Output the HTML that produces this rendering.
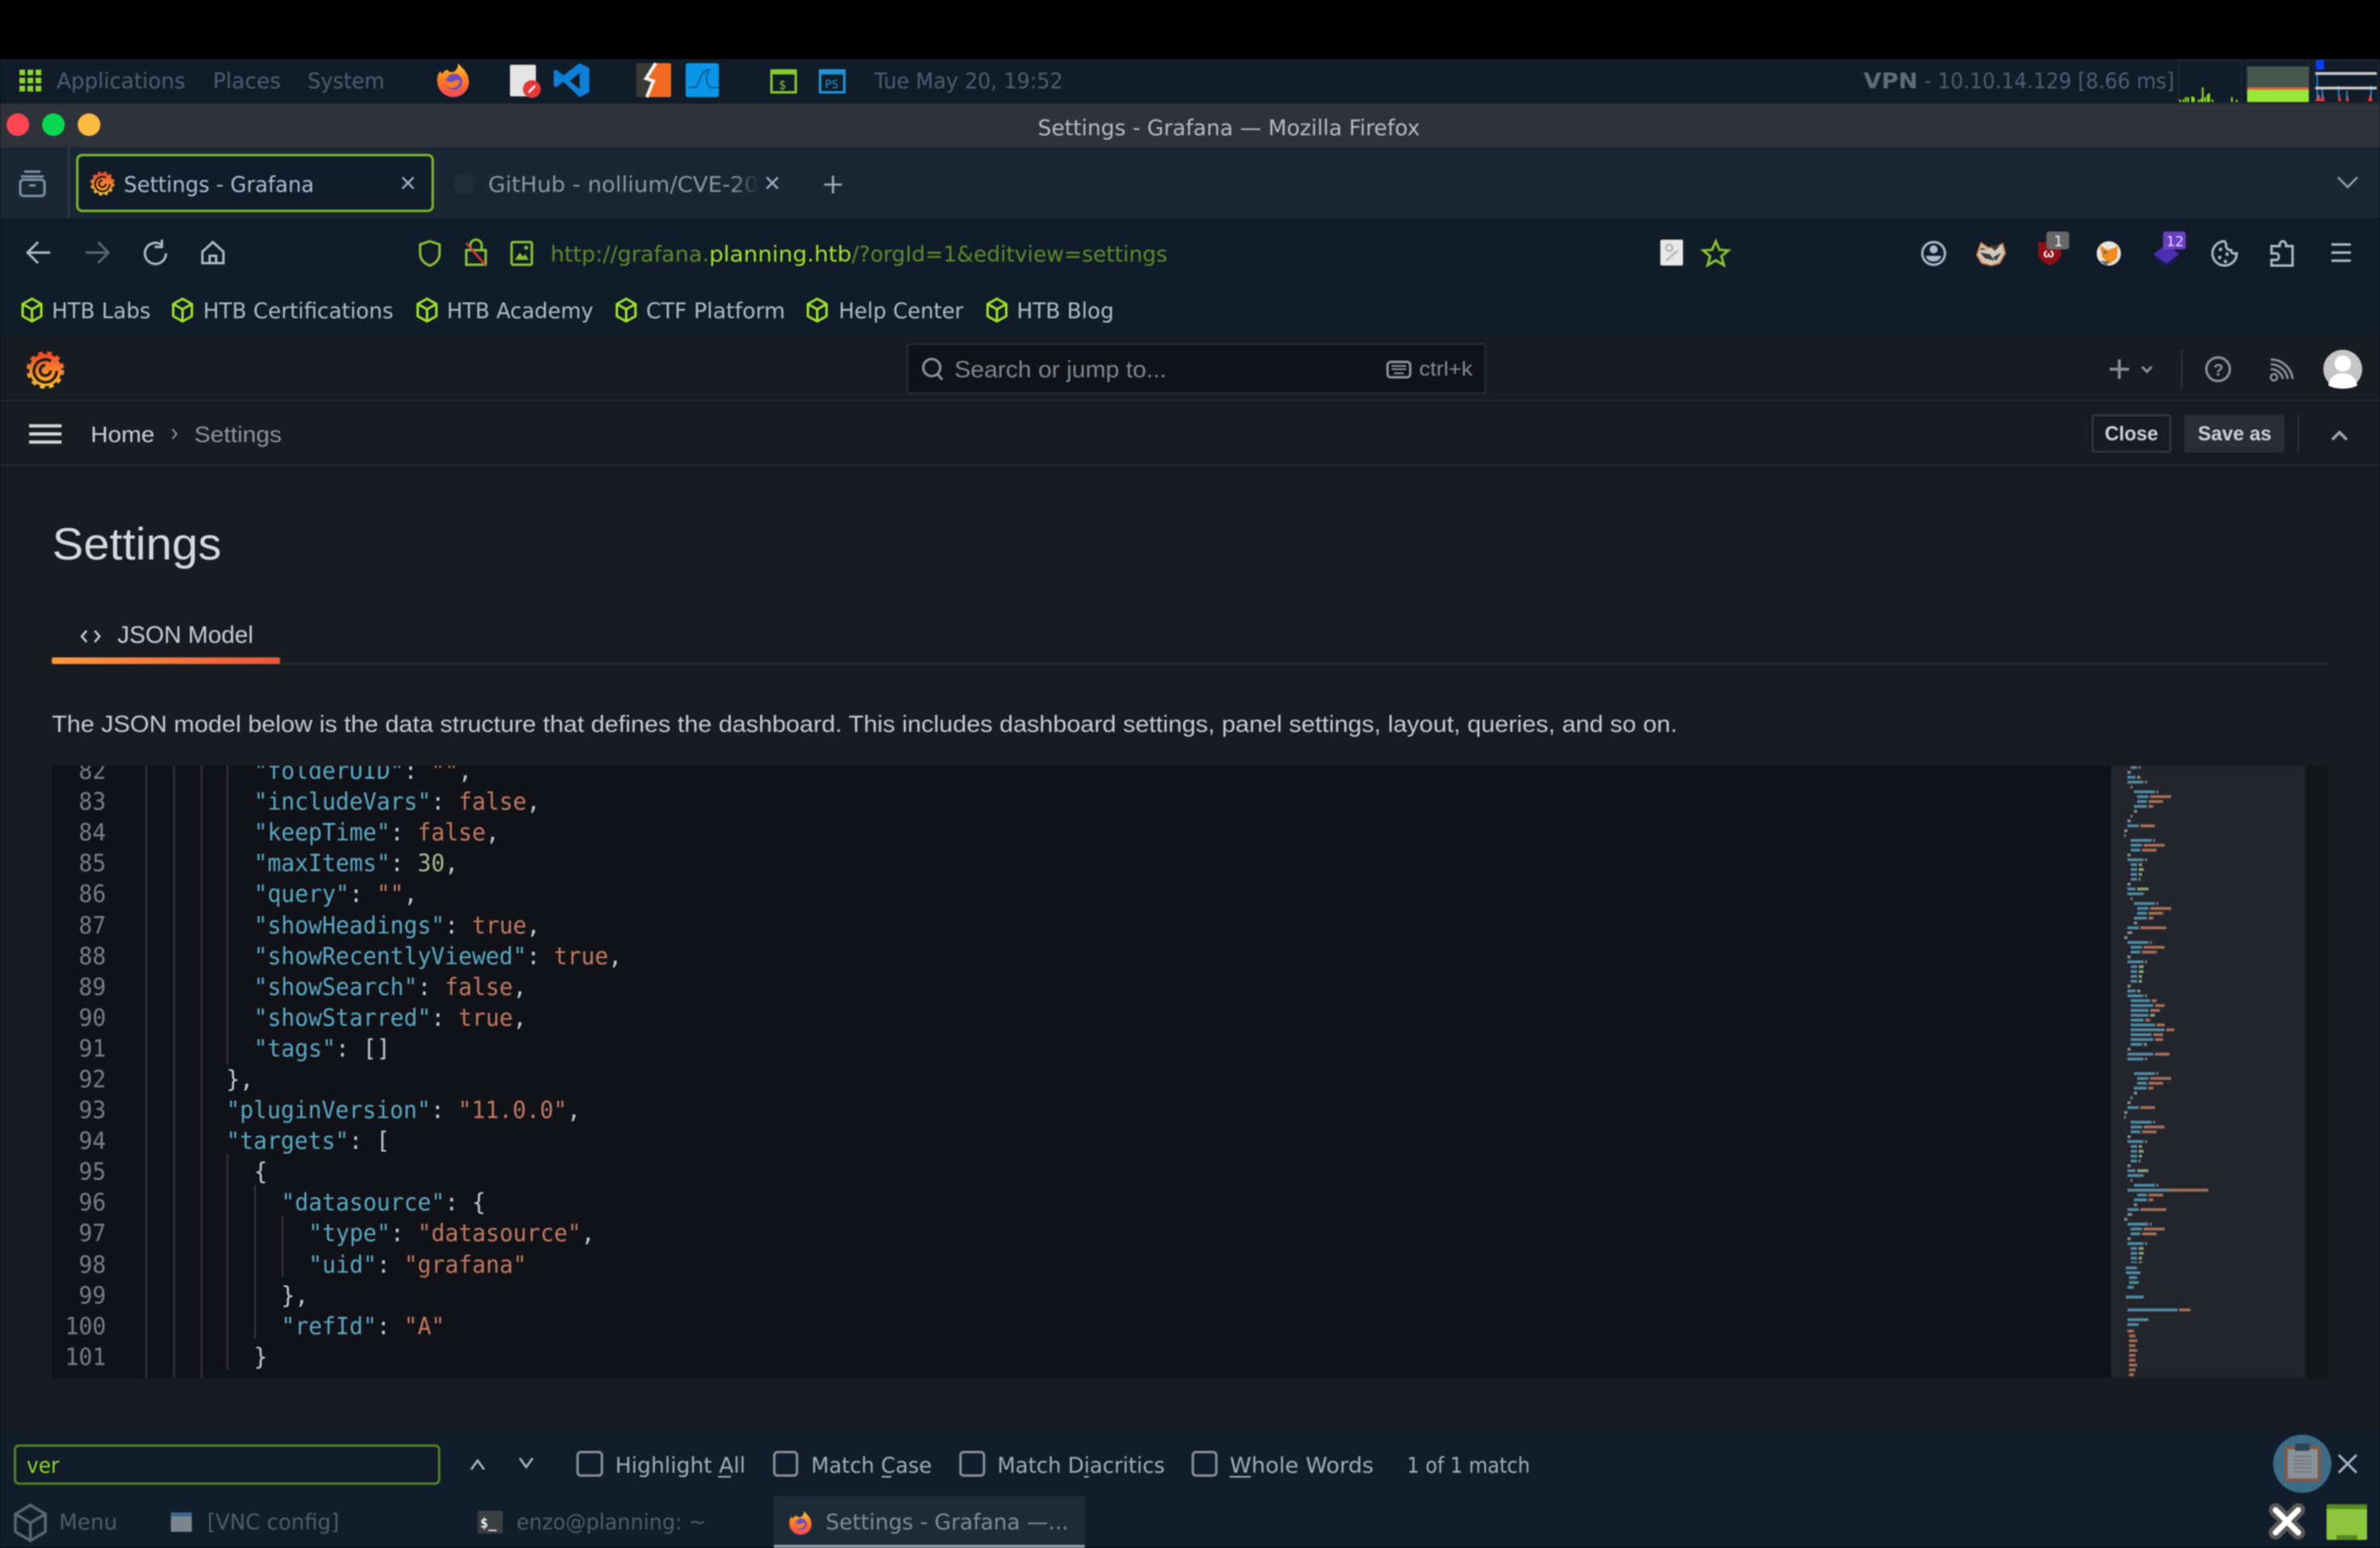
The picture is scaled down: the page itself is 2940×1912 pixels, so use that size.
<!DOCTYPE html>
<html><head><meta charset="utf-8"><title>Settings - Grafana</title>
<style>
html,body{margin:0;padding:0;background:#000;width:2940px;height:1912px;overflow:hidden}
svg{display:block;filter:blur(.7px)}
.u{font-family:"DejaVu Sans",sans-serif}
.i{font-family:"Liberation Sans",sans-serif}
.m{font-family:"DejaVu Sans Mono",monospace;font-size:29px;fill:#c8cad2}
.k{fill:#5aa9c4}.s{fill:#c07a62}.n{fill:#a9b88f}
.ln{font-family:"DejaVu Sans Mono",monospace;font-size:29px;fill:#7a7e85;text-anchor:end}
</style></head><body>
<svg xmlns="http://www.w3.org/2000/svg" width="2940" height="1912" viewBox="0 0 2940 1912">
<defs>
<linearGradient id="gg" x1="0" y1="0" x2="0" y2="1"><stop offset="0" stop-color="#f0492c"/><stop offset="1" stop-color="#fbc02d"/></linearGradient>
<linearGradient id="ul" x1="0" y1="0" x2="1" y2="0"><stop offset="0" stop-color="#ff9a3c"/><stop offset="1" stop-color="#f0533a"/></linearGradient>
<linearGradient id="ff" x1="0" y1="0" x2="0" y2="1"><stop offset="0" stop-color="#ffc42e"/><stop offset=".5" stop-color="#ff7a1f"/><stop offset="1" stop-color="#f0445c"/></linearGradient>
<symbol id="graf" viewBox="0 0 48 48">
<circle cx="24" cy="25" r="20" fill="url(#gg)"/>
<circle cx="24" cy="25" r="21.500" fill="none" stroke="url(#gg)" stroke-width="3.500" stroke-dasharray="6 5.500"/>
<path d="M31 14a14 14 0 1 0 7 12M24 19a6.500 6.500 0 1 0 6.500 6.500" fill="none" stroke="#2a1c18" stroke-width="3.500"/>
</symbol>
<symbol id="fox" viewBox="0 0 40 42">
<path d="M26 0c3 5 11 9 13 20 2 13-8 22-19 22S0 33 0 21c0-5 2-9 4-11l2 4c1-3 4-5 6-6 2 2 4 3 6 3 4 0 8-4 8-11z" fill="url(#ff)"/>
<circle cx="21" cy="23" r="10" fill="#6f4bc0"/><path d="M11 21c4 4 9 2 12 0 2-1 4 0 5 2-2 7-9 9-13 7-3-2-4-5-4-9z" fill="#f77b21"/>
</symbol>
<symbol id="cube" viewBox="0 0 27 32"><path d="M13.500 2L25 8.500V23.500L13.500 30L2 23.500V8.500ZM2 8.500L13.500 15L25 8.500M13.500 15V30" fill="none" stroke="#9fe32b" stroke-width="3" stroke-linejoin="round"/></symbol>
<g id="mm">
<path fill="none" stroke="#4f8ba5" stroke-width="3.600" d="M2636 978h26M2640 984h14M2640 990h12M2636 996h16M2628 1020h14M2632 1038h26M2632 1044h14M2632 1050h12M2628 1062h20M2632 1068h8M2632 1074h8M2632 1080h8M2632 1086h8M2628 1098h10M2628 1104h20M2636 1116h26M2640 1122h14M2640 1128h12M2636 1134h16M2628 1146h14M2628 1164h26M2632 1170h14M2632 1176h12M2628 1188h20M2632 1194h8M2632 1200h8M2632 1206h8M2632 1212h8M2628 1224h10M2628 1230h20M2632 1236h24M2632 1242h28M2632 1248h22M2632 1254h22M2632 1260h16M2632 1266h30M2632 1272h42M2632 1278h26M2632 1284h28M2632 1290h14M2628 1302h32M2628 1308h20"/>
<path fill="none" stroke="#a86e58" stroke-width="3.600" d="M2656 984h26M2654 990h18M2654 996h6M2644 1020h18M2648 1044h26M2646 1050h18M2656 1122h26M2654 1128h18M2654 1134h6M2644 1146h32M2648 1170h26M2646 1176h18M2658 1236h6M2662 1242h12M2656 1248h12M2650 1260h6M2664 1266h10M2676 1272h10M2660 1278h12M2662 1284h10M2662 1302h18"/>
<path fill="none" stroke="#8aa07a" stroke-width="3.600" d="M2642 1068h4M2642 1074h6M2642 1080h4M2642 1086h2M2640 1098h14M2642 1194h6M2642 1200h6M2642 1206h4M2642 1212h4M2656 1254h6"/>
<path fill="none" stroke="#8a8c90" stroke-width="3.600" d="M2664 978h2M2636 1002h4M2632 1008h2M2628 1014h4M2624 1026h4M2624 1032h2M2660 1038h2M2628 1056h4M2650 1062h2M2628 1092h4M2632 1110h2M2664 1116h2M2636 1140h4M2632 1152h2M2628 1152h4M2624 1158h4M2656 1164h2M2628 1182h4M2650 1188h2M2628 1218h4M2640 1224h4M2650 1230h2M2648 1290h4M2628 1296h4M2650 1308h2"/>
</g>
<clipPath id="ed"><rect x="64" y="946" width="2544" height="756"/></clipPath>
<clipPath id="mc"><rect x="2608" y="946" width="240" height="614"/></clipPath>
<linearGradient id="fade" x1="0" y1="0" x2="1" y2="0"><stop offset=".9" stop-color="#8698a9"/><stop offset="1" stop-color="#8698a9" stop-opacity="0"/></linearGradient>
</defs>

<rect width="2940" height="1912" fill="#000"/>
<!-- panel -->
<rect y="73" width="2940" height="55" fill="#111c29"/>
<g fill="#8fd62c"><rect x="24" y="86" width="7" height="7"/><rect x="34" y="86" width="7" height="7"/><rect x="44" y="86" width="7" height="7"/><rect x="24" y="96" width="7" height="7"/><rect x="34" y="96" width="7" height="7"/><rect x="44" y="96" width="7" height="7"/><rect x="24" y="106" width="7" height="7"/><rect x="34" y="106" width="7" height="7"/><rect x="44" y="106" width="7" height="7"/></g>
<g class="u" font-size="27" fill="#4c5e70">
<text x="70" y="109" textLength="159" lengthAdjust="spacingAndGlyphs">Applications</text>
<text x="263" y="109" textLength="84" lengthAdjust="spacingAndGlyphs">Places</text>
<text x="380" y="109" textLength="95" lengthAdjust="spacingAndGlyphs">System</text>
<text x="1080" y="109" textLength="233" lengthAdjust="spacingAndGlyphs">Tue May 20, 19:52</text>
<text x="2377" y="109" textLength="309" lengthAdjust="spacingAndGlyphs">- 10.10.14.129 [8.66 ms]</text>
<text x="2302" y="109" textLength="67" lengthAdjust="spacingAndGlyphs" font-weight="bold" fill="#5d6d79">VPN</text>
</g>
<use href="#fox" x="540" y="78" width="40" height="42"/>
<rect x="630" y="80" width="32" height="39" rx="2" fill="#e4e4e4"/><circle cx="657" cy="110" r="11" fill="#e5383b"/><path d="M653 114l8-8" stroke="#fff" stroke-width="2.500"/>
<path d="M716 78l12 6v30l-12 6-20-19-9 7-3-2V88l3-2 9 7zM716 90l-12 10 12 10z" fill="#0e7fd6" fill-rule="evenodd"/>
<rect x="786" y="78" width="43" height="42" rx="2" fill="#f26a21"/><path d="M786 78h22l-8 18 8 2-8 22h-14z" fill="#3a3a35"/><path d="M810 78l-12 19 9 3-8 20" fill="none" stroke="#f5f5f0" stroke-width="4"/>
<rect x="847" y="78" width="41" height="42" rx="3" fill="#0a96e8"/><path d="M850 108h8c6 0 6-22 18-22-6 8-2 22 2 22h10" fill="none" stroke="#0a5f99" stroke-width="2"/>
<rect x="953" y="87" width="30" height="27" fill="#111c29" stroke="#87c933" stroke-width="3"/><rect x="953" y="87" width="30" height="5" fill="#87c933"/><text x="962" y="110" class="m" style="font-size:15px;fill:#87c933">$</text>
<rect x="1013" y="87" width="30" height="27" fill="#111c29" stroke="#2196d8" stroke-width="3"/><rect x="1013" y="87" width="30" height="5" fill="#2196d8"/><text x="1019" y="109" class="m" style="font-size:14px;fill:#2196d8">PS</text>
<!-- graphs -->
<g fill="none" stroke="#1c2733" stroke-width="2"><rect x="2691" y="74" width="78" height="53"/><rect x="2775" y="74" width="78" height="53"/><rect x="2858" y="74" width="80" height="53"/></g>
<path d="M2693 126v-3M2697 126v-3M2700 126v-6M2703 126v-6M2708 126v-7M2710 126v-6M2716 126v-3M2719 126v-4M2721 126v-18M2724 126v-6M2727 126v-9M2729 126v-11M2733 126v-3M2757 126v-6M2763 126v-3" stroke="#8fd62c" stroke-width="2.200" fill="none"/>
<rect x="2776" y="82" width="76" height="26" fill="#47574f"/><rect x="2776" y="108" width="76" height="3" fill="#e8683a"/><rect x="2776" y="111" width="76" height="15" fill="#98e83a"/>
<rect x="2861" y="74" width="10" height="12" fill="#0a3cff"/>
<path d="M2860 125l4-10 4 10zM2867 125l2-12 3 12zM2888 125l2-9 2 9zM2897 125l3-8 2 8zM2925 125l3-9 3 9z" fill="#ef3a3a"/>
<path d="M2862.500 92v30M2868.600 108v14M2889 106v14M2899 112v10M2929 106v14" stroke="#1a9cf0" stroke-width="1.600"/>
<rect x="2860" y="89" width="76" height="3.500" fill="#c8c8c8"/><rect x="2860" y="107" width="76" height="3.500" fill="#c8c8c8"/>

<!-- title bar -->
<rect y="128" width="2940" height="54" fill="#2d323b"/>
<circle cx="22" cy="154" r="14" fill="#fc4652"/><circle cx="66" cy="154" r="14" fill="#06d850"/><circle cx="110" cy="154" r="14" fill="#ffba42"/>
<text x="1282" y="167" class="u" font-size="27" fill="#b5bcc5" textLength="472" lengthAdjust="spacingAndGlyphs">Settings - Grafana — Mozilla Firefox</text>

<!-- tabs -->
<rect y="182" width="2940" height="88" fill="#1a2632"/>
<rect x="84" y="182" width="2" height="88" fill="#2d3945"/>
<path d="M30 212h20M26 218h28" fill="none" stroke="#7b90a5" stroke-width="3"/><rect x="25" y="222" width="30" height="20" rx="4" fill="none" stroke="#7b90a5" stroke-width="3"/><path d="M36 229h8" stroke="#7b90a5" stroke-width="3"/>
<rect x="95.500" y="191.500" width="439" height="69" rx="6" fill="#111c29" stroke="#7ab52c" stroke-width="3"/>
<use href="#graf" x="111" y="210" width="31" height="32"/>
<text x="153" y="237" class="u" font-size="27" fill="#a9bdd0" textLength="235" lengthAdjust="spacingAndGlyphs">Settings - Grafana</text>
<path d="M497 219l14 14M511 219l-14 14M947 219l14 14M961 219l-14 14" stroke="#9db0c2" stroke-width="2.400" fill="none"/>
<circle cx="573" cy="227" r="13" fill="#202c38"/>
<text x="603" y="237" class="u" font-size="27" fill="url(#fade)" textLength="334" lengthAdjust="spacingAndGlyphs">GitHub - nollium/CVE-20</text>
<path d="M1029 217v22M1018 228h22" stroke="#a0b0c0" stroke-width="2.600"/>
<path d="M2888 219l12 12 12-12" fill="none" stroke="#8fa0b2" stroke-width="2.600"/>

<!-- toolbar -->
<rect y="270" width="2940" height="145" fill="#111c29"/>
<rect y="270" width="2940" height="2" fill="#0e1722"/>
<path d="M62 312H35M47 299l-13 13 13 13" fill="none" stroke="#a8b8c8" stroke-width="3"/>
<path d="M106 312h27M121 299l13 13-13 13" fill="none" stroke="#566676" stroke-width="3"/>
<path d="M199 302a13 13 0 1 0 6 11M200 296v9h-9" fill="none" stroke="#a8b8c8" stroke-width="3"/>
<path d="M263 299l-13 12v14h26v-14zM259 325v-9h8v9" fill="none" stroke="#a8b8c8" stroke-width="3"/>
<path d="M531 298l12 4v11c0 8-6 13-12 15-6-2-12-7-12-15v-11z" fill="none" stroke="#86c232" stroke-width="3"/>
<path d="M581 309v-6a7 7 0 0 1 14 0v6M576 309h24v18h-24z" fill="none" stroke="#86c232" stroke-width="3"/><path d="M576 300l24 28" stroke="#e5383b" stroke-width="2.500"/>
<rect x="632" y="299" width="25" height="28" rx="2" fill="none" stroke="#86c232" stroke-width="3"/><path d="M636 321l6-9 4 5 3-3 4 7z" fill="#86c232"/><circle cx="650" cy="306" r="2.500" fill="#86c232"/>
<text x="680" y="323" class="u" font-size="27" fill="#5d8a2a" textLength="196" lengthAdjust="spacingAndGlyphs">http://grafana.</text>
<text x="876" y="323" class="u" font-size="27" fill="#9fe32b" textLength="176" lengthAdjust="spacingAndGlyphs">planning.htb</text>
<text x="1052" y="323" class="u" font-size="27" fill="#5d8a2a" textLength="390" lengthAdjust="spacingAndGlyphs">/?orgId=1&amp;editview=settings</text>
<rect x="2051" y="296" width="28" height="32" rx="2" fill="#e8e8e8"/><circle cx="2062" cy="306" r="4" fill="none" stroke="#aaa" stroke-width="2"/><path d="M2058 322l14-12" stroke="#bbb" stroke-width="3"/>
<path d="M2119.500 298l4.500 10.500 11 .8-8.500 7.200 3 11-10-6-10 6 3-11-8.500-7.200 11-.8z" fill="none" stroke="#86c232" stroke-width="3"/>
<!-- ext icons -->
<circle cx="2388.600" cy="313" r="14" fill="none" stroke="#a8b8c8" stroke-width="3"/><circle cx="2388.600" cy="308" r="5" fill="#a8b8c8"/><path d="M2379 316h19c-1 5-5 7-9.500 7s-8.500-2-9.500-7z" fill="#a8b8c8"/>
<path d="M2447 300l9 6h8l10-5 3 12-7 12-10 3-12-3-6-10z" fill="#cfc8bc" stroke="#d67a3a" stroke-width="1.800"/><path d="M2446 312l12 2 6 8-12-3zM2458 303l12 1-6 6zM2448 306l6 2-8 1zM2462 318l10-6-6 10z" fill="#3a3a3a"/>
<path d="M2518 299h28v15c0 7-8 11-14 14-6-3-14-7-14-14z" fill="#8f0f14"/><text x="2524" y="318" class="i" font-size="16" font-weight="bold" fill="#fff">ω</text>
<rect x="2528" y="286" width="28" height="22" rx="3" fill="#676767"/><text x="2537" y="304" class="u" font-size="18" fill="#eee">1</text>
<circle cx="2605" cy="313" r="15" fill="#e9e4dc"/><path d="M2594 303l9 6 7-2 6-3-1 15-9 7-9-8z" fill="#ef8a1e"/><path d="M2594 322l8 6 4-5zM2598 309l6 3-5 2z" fill="#666"/>
<path d="M2676 302l16 12-16 12-16-12z" fill="#4a2db0"/><path d="M2662 318l14 10 14-10 1 1-15 11-15-11z" fill="#141a6e"/>
<rect x="2672" y="286" width="28" height="22" rx="3" fill="#6a3fc0"/><text x="2676" y="304" class="u" font-size="17" fill="#e8e0ff">12</text>
<path d="M2748 298a15 15 0 1 0 15 15c-4 1-7-1-7-4-4 0-7-3-6-7-1-2-1-3-2-4z" fill="none" stroke="#a8b8c8" stroke-width="3"/><g fill="#a8b8c8"><circle cx="2743" cy="308" r="2.200"/><circle cx="2751" cy="314" r="2.200"/><circle cx="2742" cy="318" r="2.200"/><circle cx="2749" cy="323" r="2.200"/></g>
<path d="M2816 304c0-3 1-6 4-6s4 3 4 6h8v24h-26v-7h6c2 0 3-2 3-4s-1-4-3-4h-6v-9z" fill="none" stroke="#a8b8c8" stroke-width="3"/>
<path d="M2880 302h24M2880 312h24M2880 322h24" stroke="#a8b8c8" stroke-width="3"/>
<!-- bookmarks -->
<use href="#cube" x="26" y="367" width="27" height="32"/><use href="#cube" x="212" y="367" width="27" height="32"/><use href="#cube" x="514" y="367" width="27" height="32"/><use href="#cube" x="760" y="367" width="27" height="32"/><use href="#cube" x="996" y="367" width="27" height="32"/><use href="#cube" x="1218" y="367" width="27" height="32"/>
<g class="u" font-size="27" fill="#aebccb">
<text x="64" y="393" textLength="122" lengthAdjust="spacingAndGlyphs">HTB Labs</text>
<text x="251" y="393" textLength="235" lengthAdjust="spacingAndGlyphs">HTB Certifications</text>
<text x="552" y="393" textLength="181" lengthAdjust="spacingAndGlyphs">HTB Academy</text>
<text x="798" y="393" textLength="172" lengthAdjust="spacingAndGlyphs">CTF Platform</text>
<text x="1036" y="393" textLength="154" lengthAdjust="spacingAndGlyphs">Help Center</text>
<text x="1256" y="393" textLength="120" lengthAdjust="spacingAndGlyphs">HTB Blog</text>
</g>

<!-- grafana -->
<rect y="415" width="2940" height="1352" fill="#181b1f"/>
<use href="#graf" x="32" y="432" width="48" height="48"/>
<rect x="1121" y="425" width="714" height="61" rx="3" fill="#111217" stroke="#2b2e34" stroke-width="2"/>
<circle cx="1151" cy="454" r="10.500" fill="none" stroke="#8e9299" stroke-width="3"/><path d="M1158 462l6 7" stroke="#8e9299" stroke-width="3"/>
<text x="1179" y="466" class="i" font-size="29" fill="#7e8793" textLength="262" lengthAdjust="spacingAndGlyphs">Search or jump to...</text>
<rect x="1714" y="447" width="28" height="19" rx="4" fill="none" stroke="#8e9299" stroke-width="3"/><path d="M1719 452h18M1719 456h18M1722 461h12" stroke="#8e9299" stroke-width="2"/>
<text x="1753" y="464" class="i" font-size="25" fill="#838b96" textLength="66" lengthAdjust="spacingAndGlyphs">ctrl+k</text>
<path d="M2618 444v24M2606 456h24" stroke="#8e9299" stroke-width="3.500"/>
<path d="M2646 453l6 6 6-6" fill="none" stroke="#8e9299" stroke-width="3"/>
<rect x="2694" y="432" width="2" height="48" fill="#2f3237"/>
<circle cx="2740" cy="456" r="14.500" fill="none" stroke="#8e9299" stroke-width="3"/><text x="2734" y="464" class="i" font-size="21" font-weight="bold" fill="#8e9299">?</text>
<circle cx="2809" cy="466" r="4" fill="none" stroke="#8e9299" stroke-width="2.500"/><path d="M2805 456a15 15 0 0 1 15 12M2805 450a21 21 0 0 1 21 18M2805 444a27 27 0 0 1 27 24" fill="none" stroke="#8e9299" stroke-width="2.800"/>
<circle cx="2894" cy="456" r="24" fill="#c6c6c6"/><circle cx="2894" cy="449" r="10" fill="#fff"/><path d="M2876 476c2-11 10-15 18-15s16 4 18 15c-5 3-11 4-18 4s-13-1-18-4z" fill="#fff"/>
<rect y="494" width="2940" height="2" fill="#26292e"/>
<rect y="574" width="2940" height="2" fill="#26292e"/>
<path d="M36 526h40M36 536h40M36 546h40" stroke="#d5d6da" stroke-width="4"/>
<text x="112" y="546" class="i" font-size="28" fill="#ccd0d8" textLength="79" lengthAdjust="spacingAndGlyphs">Home</text>
<path d="M213 530l5 6-5 6" fill="none" stroke="#8f949c" stroke-width="2"/>
<text x="240" y="546" class="i" font-size="28" fill="#8f949c" textLength="108" lengthAdjust="spacingAndGlyphs">Settings</text>
<rect x="2585" y="513" width="96" height="45" rx="2" fill="none" stroke="#3a3d42" stroke-width="2"/>
<text x="2600" y="544" class="i" font-size="25" font-weight="bold" fill="#ccd0d8" textLength="66" lengthAdjust="spacingAndGlyphs">Close</text>
<rect x="2698" y="512" width="124" height="47" rx="3" fill="#2a2d33"/>
<text x="2715" y="544" class="i" font-size="25" font-weight="bold" fill="#ccd0d8" textLength="91" lengthAdjust="spacingAndGlyphs">Save as</text>
<rect x="2838" y="512" width="2" height="47" fill="#2f3237"/>
<path d="M2881 543l9-9 9 9" fill="none" stroke="#a2a5aa" stroke-width="3.500"/>
<text x="64.500" y="691" class="i" font-size="56" fill="#d8d9de" textLength="209" lengthAdjust="spacingAndGlyphs">Settings</text>
<path d="M107 779l-6 7 6 7M117 779l6 7-6 7" fill="none" stroke="#ccced6" stroke-width="2.500"/>
<text x="145" y="794" class="i" font-size="30" fill="#ccced6" textLength="168" lengthAdjust="spacingAndGlyphs">JSON Model</text>
<rect x="64" y="819" width="2812" height="2" fill="#2a2d32"/>
<rect x="64" y="812" width="282" height="8" rx="2" fill="url(#ul)"/>
<text x="64" y="904" class="i" font-size="29" fill="#c8ccd3" textLength="2008" lengthAdjust="spacingAndGlyphs">The JSON model below is the data structure that defines the dashboard. This includes dashboard settings, panel settings, layout, queries, and so on.</text>

<!-- editor -->
<rect x="64" y="946" width="2544" height="756" fill="#111217"/>
<rect x="2608" y="946" width="240" height="756" fill="#22252b"/>
<rect x="2848" y="946" width="28" height="756" fill="#131518"/>
<path d="M180.500 946V1702M215 946V1702M249 946V1702M281 946V1315M281 1426V1692M315 1464V1653M349 1502V1577" stroke="#3a3d41" stroke-width="1.800" fill="none"/>
<g clip-path="url(#ed)">
<g transform="translate(0 1) scale(.965 1)">
<g class="ln">
<text x="135.700" y="961">82</text><text x="135.700" y="999">83</text><text x="135.700" y="1037">84</text><text x="135.700" y="1075">85</text><text x="135.700" y="1113">86</text><text x="135.700" y="1152">87</text><text x="135.700" y="1190">88</text><text x="135.700" y="1228">89</text><text x="135.700" y="1266">90</text><text x="135.700" y="1304">91</text><text x="135.700" y="1342">92</text><text x="135.700" y="1380">93</text><text x="135.700" y="1418">94</text><text x="135.700" y="1456">95</text><text x="135.700" y="1494">96</text><text x="135.700" y="1532">97</text><text x="135.700" y="1571">98</text><text x="135.700" y="1609">99</text><text x="135.700" y="1647">100</text><text x="135.700" y="1685">101</text>
</g>
<g class="m" style="white-space:pre">
<text x="325" y="961"><tspan class="k">"folderUID"</tspan>: <tspan class="s">""</tspan>,</text>
<text x="325" y="999"><tspan class="k">"includeVars"</tspan>: <tspan class="s">false</tspan>,</text>
<text x="325" y="1037"><tspan class="k">"keepTime"</tspan>: <tspan class="s">false</tspan>,</text>
<text x="325" y="1075"><tspan class="k">"maxItems"</tspan>: <tspan class="n">30</tspan>,</text>
<text x="325" y="1113"><tspan class="k">"query"</tspan>: <tspan class="s">""</tspan>,</text>
<text x="325" y="1152"><tspan class="k">"showHeadings"</tspan>: <tspan class="s">true</tspan>,</text>
<text x="325" y="1190"><tspan class="k">"showRecentlyViewed"</tspan>: <tspan class="s">true</tspan>,</text>
<text x="325" y="1228"><tspan class="k">"showSearch"</tspan>: <tspan class="s">false</tspan>,</text>
<text x="325" y="1266"><tspan class="k">"showStarred"</tspan>: <tspan class="s">true</tspan>,</text>
<text x="325" y="1304"><tspan class="k">"tags"</tspan>: []</text>
<text x="289.600" y="1342">},</text>
<text x="289.600" y="1380"><tspan class="k">"pluginVersion"</tspan>: <tspan class="s">"11.0.0"</tspan>,</text>
<text x="289.600" y="1418"><tspan class="k">"targets"</tspan>: [</text>
<text x="325" y="1456">{</text>
<text x="360" y="1494"><tspan class="k">"datasource"</tspan>: {</text>
<text x="395" y="1532"><tspan class="k">"type"</tspan>: <tspan class="s">"datasource"</tspan>,</text>
<text x="395" y="1571"><tspan class="k">"uid"</tspan>: <tspan class="s">"grafana"</tspan></text>
<text x="360" y="1609">},</text>
<text x="360" y="1647"><tspan class="k">"refId"</tspan>: <tspan class="s">"A"</tspan></text>
<text x="325" y="1685">}</text>
</g>
</g>
</g>
<!-- minimap -->
<path fill="none" stroke="#4f8ba5" stroke-width="3.600" d="M2632 948h8M2628 960h10M2628 966h20"/>
<path fill="none" stroke="#8a8c90" stroke-width="3.600" d="M2642 948h2M2628 954h4M2640 960h4M2650 966h2M2632 972h2"/>
<use href="#mm"/>
<g clip-path="url(#mc)"><use href="#mm" y="348"/></g>
<path fill="none" stroke="#4f8ba5" stroke-width="3.600" d="M2628 1470h50M2626 1566h14M2626 1572h18M2630 1578h10M2630 1584h12M2628 1590h8M2626 1602h22M2628 1618h62M2628 1630h26M2628 1636h14"/>
<path fill="none" stroke="#a86e58" stroke-width="3.600" d="M2680 1470h48M2692 1618h14M2628 1644h8M2630 1650h8M2630 1656h10M2630 1662h8M2630 1668h10M2630 1674h8M2630 1680h8M2630 1686h10M2630 1692h8M2630 1698h6"/>

<!-- find bar -->
<rect y="1767" width="2940" height="145" fill="#111d2a"/>
<rect x="18.500" y="1785.500" width="524" height="47" rx="5" fill="#111c29" stroke="#527f25" stroke-width="3"/>
<text x="33" y="1819" class="u" font-size="27" fill="#8fd62c" textLength="40" lengthAdjust="spacingAndGlyphs">ver</text>
<path d="M582 1815l8-11 8 11M642 1801l8 11 8-11" fill="none" stroke="#a8b8c8" stroke-width="2.600"/>
<g fill="none" stroke="#888e96" stroke-width="3">
<rect x="713.500" y="1793.500" width="30" height="29" rx="4"/><rect x="956.500" y="1793.500" width="28" height="29" rx="4"/><rect x="1186.500" y="1793.500" width="29" height="29" rx="4"/><rect x="1473.500" y="1793.500" width="29" height="29" rx="4"/>
</g>
<g class="u" font-size="27" fill="#a0adba">
<text x="760" y="1819" textLength="161" lengthAdjust="spacingAndGlyphs">Highlight All</text>
<text x="1002" y="1819" textLength="149" lengthAdjust="spacingAndGlyphs">Match Case</text>
<text x="1232" y="1819" textLength="207" lengthAdjust="spacingAndGlyphs">Match Diacritics</text>
<text x="1519" y="1819" textLength="178" lengthAdjust="spacingAndGlyphs">Whole Words</text>
<text x="1738" y="1819" textLength="152" lengthAdjust="spacingAndGlyphs">1 of 1 match</text>
</g>
<path d="M887 1824h16M1089 1824h12M1339 1824h6M1519 1824h26" stroke="#a0adba" stroke-width="2"/>
<circle cx="2844" cy="1808" r="36" fill="#3c6b85"/>
<rect x="2822" y="1786" width="45" height="44" rx="3" fill="#7f5a44"/><rect x="2826" y="1790" width="37" height="36" fill="#8a9199"/><rect x="2835" y="1783" width="18" height="9" rx="2" fill="#2c4458"/>
<path d="M2833 1799h23M2833 1804h23M2833 1808h23M2833 1813h23M2833 1818h23" stroke="#71787f" stroke-width="1.800"/>
<path d="M2889 1797l22 22M2911 1797l-22 22" stroke="#a5b5c8" stroke-width="3"/>

<!-- taskbar -->
<path d="M37.500 1859L56 1870V1892L37.500 1903L19 1892V1870ZM19 1870L37.500 1881L56 1870M37.500 1881V1903" fill="none" stroke="#5a6670" stroke-width="3.500"/>
<rect x="211" y="1868" width="26" height="24" fill="#7c8690"/><rect x="211" y="1868" width="26" height="5" fill="#36688f"/>
<rect x="590" y="1866" width="31" height="28" fill="#3a3d42"/><text x="593" y="1887" class="m" style="font-size:17px;fill:#f0f0f0;font-weight:bold">$_</text>
<rect x="956" y="1848" width="384" height="64" fill="#1e2a36"/><rect x="956" y="1908" width="384" height="4" fill="#8a97a5"/>
<use href="#fox" x="975" y="1866" width="28" height="30"/>
<g class="u" font-size="27" fill="#4f5d6a">
<text x="73" y="1889" textLength="72" lengthAdjust="spacingAndGlyphs">Menu</text>
<text x="256" y="1889" textLength="163" lengthAdjust="spacingAndGlyphs">[VNC config]</text>
<text x="638" y="1889" textLength="234" lengthAdjust="spacingAndGlyphs">enzo@planning: ~</text>
<text x="1020" y="1889" textLength="300" lengthAdjust="spacingAndGlyphs" fill="#7f8c99">Settings - Grafana —...</text>
</g>
<path d="M2811 1865l28 28M2839 1865l-28 28" stroke="#585858" stroke-width="17" stroke-linecap="round"/>
<path d="M2811 1865l28 28M2839 1865l-28 28" stroke="#fff" stroke-width="7" stroke-linecap="round"/>
<rect x="2874" y="1858" width="50" height="44" rx="2" fill="#8cc63f"/><rect x="2874" y="1858" width="50" height="6" fill="#5a8a1f"/><rect x="2886" y="1896" width="26" height="6" rx="2" fill="#5a8a1f"/>
</svg>
</body></html>
